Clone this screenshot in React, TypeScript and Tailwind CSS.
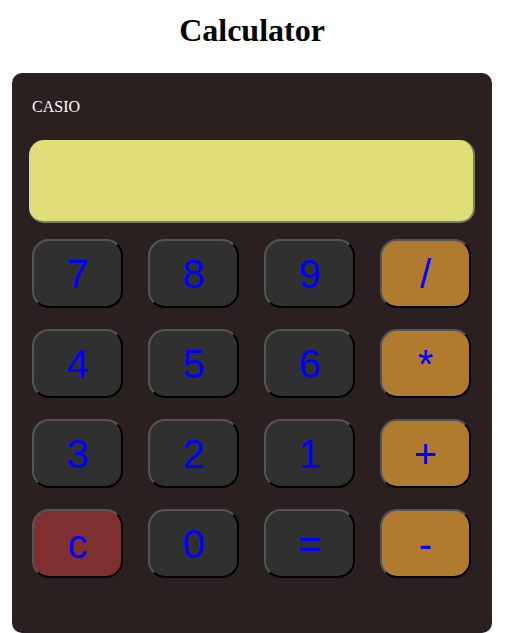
const keys = [
  { label: "7", tone: "num" },
  { label: "8", tone: "num" },
  { label: "9", tone: "num" },
  { label: "/", tone: "op" },
  { label: "4", tone: "num" },
  { label: "5", tone: "num" },
  { label: "6", tone: "num" },
  { label: "*", tone: "op" },
  { label: "3", tone: "num" },
  { label: "2", tone: "num" },
  { label: "1", tone: "num" },
  { label: "+", tone: "op" },
  { label: "c", tone: "clear" },
  { label: "0", tone: "num" },
  { label: "=", tone: "num" },
  { label: "-", tone: "op" },
];

const toneBg: Record<string, string> = {
  num: "bg-[#303030]",
  op: "bg-[#b07a2f]",
  clear: "bg-[#7e3030]",
};

export default function App() {
  return (
    <div className="w-[504px] bg-white font-['Liberation_Serif',serif]">
      <h1 className="pt-[12px] text-center text-[32px] font-bold leading-[37px] text-black">Calculator</h1>

      <div className="mx-auto mt-[24px] h-[560px] w-[480px] rounded-[10px] bg-[#2b2020] pt-[24px]">
        <div className="pl-[20px] text-[16px] leading-[19px] text-white">CASIO</div>

        <div className="ml-[17px] mt-[24px] h-[83px] w-[446px] rounded-[15px] border-b-2 border-r-2 border-[#7a7a7a] bg-[#e0df77]" />

        <div className="ml-[20px] mt-[16px] grid grid-cols-[repeat(4,91px)] gap-x-[25px] gap-y-[21px]">
          {keys.map((k) => (
            <button
              key={k.label}
              className={`flex h-[69px] w-[91px] items-center justify-center rounded-[17px] border-2 border-t-[#555] border-l-[#555] border-b-black border-r-black font-['Liberation_Sans',Arial,sans-serif] text-[40px] leading-none text-[#0000ff] ${toneBg[k.tone]}`}
            >
              {k.label}
            </button>
          ))}
        </div>
      </div>
    </div>
  );
}
